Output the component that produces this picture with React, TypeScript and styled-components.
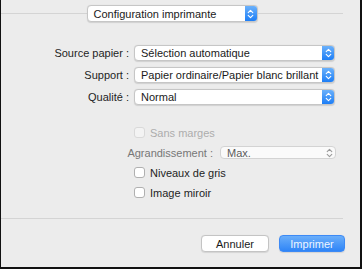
import styled, { createGlobalStyle } from "styled-components";

const GlobalStyle = createGlobalStyle`
  html, body {
    margin: 0;
    padding: 0;
    background: #ececec;
  }
  * {
    box-sizing: border-box;
  }
`;

function Stepper({ disabled }: { disabled?: boolean }) {
  const color = disabled ? "#9a9a9a" : "#ffffff";
  return (
    <StepperBox $disabled={disabled}>
      <svg width="7" height="10" viewBox="0 0 7 10">
        <path d="M1.2 3.6 L3.5 1.4 L5.8 3.6" fill="none" stroke={color} strokeWidth="1.1" strokeLinecap="round" strokeLinejoin="round" />
        <path d="M1.2 6.4 L3.5 8.6 L5.8 6.4" fill="none" stroke={color} strokeWidth="1.1" strokeLinecap="round" strokeLinejoin="round" />
      </svg>
    </StepperBox>
  );
}

function Popup({ value, disabled }: { value: string; disabled?: boolean }) {
  return (
    <PopupBox $disabled={disabled}>
      <PopupText $disabled={disabled}>{value}</PopupText>
      <Stepper disabled={disabled} />
    </PopupBox>
  );
}

function Checkbox({ label, disabled }: { label: string; disabled?: boolean }) {
  return (
    <CheckRow>
      <Box $disabled={disabled} />
      <CheckLabel $disabled={disabled}>{label}</CheckLabel>
    </CheckRow>
  );
}

export default function App() {
  return (
    <Page>
      <GlobalStyle />
      <Header>
        <Line />
        <TopPopup>
          <PopupBox>
            <PopupText>Configuration imprimante</PopupText>
            <Stepper />
          </PopupBox>
        </TopPopup>
        <Line />
      </Header>

      <Form>
        <Label>Source papier :</Label>
        <Popup value="Sélection automatique" />
        <Label>Support :</Label>
        <Popup value="Papier ordinaire/Papier blanc brillant" />
        <Label>Qualité :</Label>
        <Popup value="Normal" />
      </Form>

      <Options>
        <Checkbox label="Sans marges" disabled />
        <ScaleRow>
          <Label $muted>Agrandissement :</Label>
          <ScalePopup>
            <Popup value="Max." disabled />
          </ScalePopup>
        </ScaleRow>
        <Checkbox label="Niveaux de gris" />
        <Checkbox label="Image miroir" />
      </Options>

      <Separator />

      <Footer>
        <Button>Annuler</Button>
        <Button $primary>Imprimer</Button>
      </Footer>
    </Page>
  );
}

const Page = styled.div`
  width: 362px;
  height: 269px;
  background: #ececec;
  border-left: 1px solid #111;
  border-right: 2px solid #111;
  border-bottom: 2px solid #111;
  font-family: "Liberation Sans", Arial, sans-serif;
  font-size: 11px;
  color: #1e1e1e;
  overflow: hidden;
`;

const Header = styled.div`
  display: flex;
  align-items: center;
  margin-top: 5px;
  padding-right: 17px;
  height: 17px;
`;

const Line = styled.div`
  flex: 1;
  height: 1px;
  background: #d4d4d4;
`;

const TopPopup = styled.div`
  width: 171px;
  height: 17px;
  display: flex;
`;

const PopupBox = styled.div<{ $disabled?: boolean }>`
  flex: 1;
  display: flex;
  align-items: stretch;
  height: 100%;
  background: ${(p) => (p.$disabled ? "#fafafa" : "#ffffff")};
  border: 1px solid ${(p) => (p.$disabled ? "#d3d3d3" : "#c6c6c6")};
  border-radius: 4px;
  box-shadow: ${(p) => (p.$disabled ? "none" : "0 0.5px 1px rgba(0, 0, 0, 0.12)")};
  overflow: hidden;
`;

const PopupText = styled.span<{ $disabled?: boolean }>`
  flex: 1;
  display: flex;
  align-items: center;
  padding-left: 6px;
  white-space: nowrap;
  overflow: hidden;
  color: ${(p) => (p.$disabled ? "#5a5a5a" : "#1a1a1a")};
`;

const StepperBox = styled.div<{ $disabled?: boolean }>`
  width: 12px;
  display: flex;
  align-items: center;
  justify-content: center;
  background: ${(p) =>
    p.$disabled ? "transparent" : "linear-gradient(#6bb1fb, #1d7ef6)"};
`;

const Form = styled.div`
  display: grid;
  grid-template-columns: 128px 201px;
  grid-auto-rows: 16px;
  column-gap: 5px;
  row-gap: 6px;
  margin-top: 23px;
`;

const Label = styled.span<{ $muted?: boolean }>`
  display: flex;
  align-items: center;
  justify-content: flex-end;
  white-space: nowrap;
  color: ${(p) => (p.$muted ? "#777777" : "#1e1e1e")};
`;

const Options = styled.div`
  display: flex;
  flex-direction: column;
  gap: 7px;
  margin-top: 21px;
`;

const CheckRow = styled.div`
  display: flex;
  align-items: center;
  gap: 5px;
  height: 13px;
  padding-left: 133px;
`;

const Box = styled.span<{ $disabled?: boolean }>`
  width: 11px;
  height: 11px;
  border-radius: 3px;
  background: ${(p) => (p.$disabled ? "#f3f3f3" : "#ffffff")};
  border: 1px solid ${(p) => (p.$disabled ? "#d9d9d9" : "#b0b0b0")};
`;

const CheckLabel = styled.span<{ $disabled?: boolean }>`
  color: ${(p) => (p.$disabled ? "#acacac" : "#1e1e1e")};
`;

const ScaleRow = styled.div`
  display: flex;
  justify-content: flex-end;
  gap: 7px;
  height: 13px;
  padding-right: 24px;
`;

const ScalePopup = styled.div`
  width: 116px;
  display: flex;
`;

const Separator = styled.div`
  height: 1px;
  margin-top: 19px;
  margin-right: 17px;
  background: #d4d4d4;
`;

const Footer = styled.div`
  display: flex;
  justify-content: flex-end;
  gap: 10px;
  margin-top: 16px;
  padding-right: 15px;
`;

const Button = styled.button<{ $primary?: boolean }>`
  height: 17px;
  width: ${(p) => (p.$primary ? "66px" : "68px")};
  padding: 0;
  border-radius: 4px;
  font-family: inherit;
  font-size: 11px;
  color: ${(p) => (p.$primary ? "#eef5ff" : "#1a1a1a")};
  background: ${(p) =>
    p.$primary ? "linear-gradient(#6aaefa, #2f85f7)" : "#ffffff"};
  border: 1px solid ${(p) => (p.$primary ? "#3d8af5" : "#c4c4c4")};
  box-shadow: 0 0.5px 1px rgba(0, 0, 0, 0.1);
`;
